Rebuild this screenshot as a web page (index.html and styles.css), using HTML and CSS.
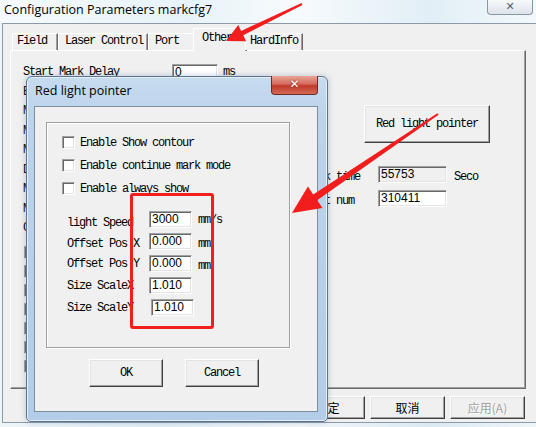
FILE: index.html
```html
<!DOCTYPE html>
<html>
<head>
<meta charset="utf-8">
<link rel="stylesheet" href="styles.css">
</head>
<body>
<div class="screen">
  <div class="window">
    <div class="titlebar">
      <span class="title">Configuration Parameters markcfg7</span>
      <span class="win-close">✕</span>
    </div>
    <div class="client">
      <div class="tabs">
        <div class="tab t-field">Field</div>
        <div class="tab t-laser">Laser Control</div>
        <div class="tab t-port">Port</div>
        <div class="tab t-other active">Other</div>
        <div class="tab t-hard">HardInfo</div>
      </div>
      <div class="panel">
        <div class="col-left">
          <div class="frow first"><span class="flabel">Start Mark Delay</span><span class="field w46">0</span><span class="unit">ms</span></div>
          <div class="frow"><span class="flabel">End Mark Delay</span></div>
          <div class="frow"><span class="flabel">Mark Speed</span></div>
          <div class="frow"><span class="flabel">Move Speed</span></div>
          <div class="frow"><span class="flabel">Mark Count</span></div>
          <div class="frow"><span class="flabel">Delay Time</span></div>
          <div class="frow"><span class="flabel">Mark Mode</span></div>
          <div class="frow"><span class="flabel">Mark Power</span></div>
          <div class="frow"><span class="flabel">Corner Delay</span></div>
          <div class="checklist">
            <span class="cb"></span><span class="cb"></span><span class="cb"></span><span class="cb"></span>
            <span class="cb"></span><span class="cb"></span><span class="cb"></span>
          </div>
        </div>
        <div class="col-right">
          <div class="btn big">Red light pointer</div>
          <div class="rrow first"><span class="rlabel">Mark time</span><span class="field w69 ro">55753</span><span class="unit clip">Seco</span></div>
          <div class="rrow"><span class="rlabel">Part num</span><span class="field w69">310411</span></div>
        </div>
      </div>
      <div class="footer">
        <div class="btn cjk">确定</div>
        <div class="btn cjk">取消</div>
        <div class="btn cjk disabled">应用(A)</div>
      </div>
    </div>
  </div>

  <div class="dialog">
    <div class="dlg-head">
      <span class="dlg-title">Red light pointer</span>
      <span class="dlg-close">✕</span>
    </div>
    <div class="dlg-client">
      <div class="group">
        <div class="checks">
          <div class="crow"><span class="cb"></span><span class="clabel">Enable Show contour</span></div>
          <div class="crow"><span class="cb"></span><span class="clabel">Enable continue mark mode</span></div>
          <div class="crow"><span class="cb"></span><span class="clabel">Enable always show</span></div>
        </div>
        <div class="fields">
          <div class="drow"><span class="dlabel low3">light Speed</span><span class="field w43">3000</span><span class="unit">mm/s</span></div>
          <div class="drow"><span class="dlabel low2">Offset Pos X</span><span class="field w43">0.000</span><span class="unit low2">mm</span></div>
          <div class="drow"><span class="dlabel">Offset Pos Y</span><span class="field w43">0.000</span><span class="unit low2">mm</span></div>
          <div class="drow"><span class="dlabel">Size ScaleX</span><span class="field w43">1.010</span></div>
          <div class="drow"><span class="dlabel">Size ScaleY</span><span class="field w43 shift">1.010</span></div>
        </div>
      </div>
      <div class="dlg-buttons">
        <div class="btn dbtn">OK</div>
        <div class="btn dbtn">Cancel</div>
      </div>
    </div>
  </div>

  <div class="highlight"></div>

  <svg class="arrows" width="536" height="427" viewBox="0 0 536 427">
    <polygon fill="#f21d1d" points="301.6,3.1 241.1,30.9 238.3,25.0 226,41 246.1,41.2 243.3,35.3 302.4,4.9"/>
    <polygon fill="#f21d1d" points="437.4,113.2 313.2,194.4 307.9,186.5 292,213 322.5,208.1 317.2,200.2 438.6,114.8"/>
  </svg>
</div>
</body>
</html>
```
FILE: styles.css
```css
* { box-sizing: border-box; }
html, body { margin: 0; padding: 0; }
body {
  width: 536px;
  height: 427px;
  overflow: hidden;
  background: linear-gradient(90deg, #eef5f9 0%, #e3eff6 30%, #f3f8fb 55%, #dbe9f2 80%, #eef5f9 100%);
  font-family: "Liberation Mono", monospace;
  font-size: 12px;
  color: #000;
}
.screen { position: relative; width: 536px; height: 427px; }

/* main window */
.titlebar {
  height: 23px;
  display: flex;
  justify-content: space-between;
  align-items: flex-start;
  padding-left: 4px;
  background: linear-gradient(90deg, #f6fafc 0%, #e7f2f8 35%, #f7fbfd 55%, #e2eef6 80%, #f2f8fb 100%);
}
.title {
  font-family: "Open Sans", "Noto Sans", sans-serif;
  font-size: 12.5px;
  line-height: 20px;
  color: #000;
}
.win-close {
  width: 46px;
  height: 15px;
  margin-right: 3px;
  border: 1px solid #8896a6;
  border-top: none;
  border-radius: 0 0 4px 4px;
  background: linear-gradient(180deg, #f7f9fb, #dde3ea);
  font-family: "DejaVu Sans", sans-serif;
  font-size: 11px;
  font-weight: bold;
  line-height: 13px;
  text-align: center;
  color: #56606c;
}
.client {
  margin-left: 2px;
  height: 400px;
  border-top: 1px solid #8c99a6;
  border-left: 1px solid #8c99a6;
  border-bottom: 1px solid #8c99a6;
  background: #f0f0f0;
}
.tabs {
  height: 26px;
  display: flex;
  align-items: flex-end;
  padding-left: 9px;
  position: relative;
  z-index: 2;
}
.tab {
  height: 17px;
  border: 1px solid;
  border-bottom: none;
  border-color: #fff #696969 transparent #fff;
  box-shadow: inset -1px 0 #a0a0a0;
  padding-left: 4px;
  line-height: 15px;
  letter-spacing: -1.2px;
  background: #f0f0f0;
}
.t-field { width: 46px; }
.t-laser { width: 90px; padding-left: 6px; }
.t-port { width: 47px; padding-left: 6px; }
.t-other { width: 52px; }
.t-hard { width: 58px; }
.tab.active {
  height: 23px;
  margin: 0 -2px -1px -2px;
  width: 54px;
  padding-left: 8px;
  line-height: 18px;
}
.panel {
  margin-left: 7px;
  width: 516px;
  height: 339px;
  border: 1px solid;
  border-color: #fff #696969 #696969 #fff;
  box-shadow: inset -1px -1px #a0a0a0;
  display: flex;
  position: relative;
  z-index: 1;
}
.col-left {
  width: 295px;
  padding-left: 12px;
  padding-top: 11px;
  letter-spacing: -1.2px;
}
.frow {
  height: 19.5px;
  display: flex;
  align-items: center;
}
.frow.first { height: 20px; }
.flabel { width: 149px; white-space: nowrap; }
.unit { margin-left: 5px; white-space: nowrap; letter-spacing: -1.2px; }
.field {
  display: inline-block;
  height: 17px;
  border: 1px solid;
  border-color: #a0a0a0 #fff #fff #a0a0a0;
  box-shadow: inset 1px 1px #696969, inset -1px -1px #e3e3e3;
  background: #fff;
  font-family: "Liberation Sans", sans-serif;
  font-size: 12px;
  letter-spacing: 0;
  line-height: 15px;
  padding-left: 2px;
}
.w46 { width: 46px; }
.w43 { width: 43px; }
.w69 { width: 69px; }
.field.ro { background: #f0f0f0; }
.checklist {
  display: flex;
  flex-direction: column;
  gap: 6px;
  margin-top: 8px;
  margin-left: 1px;
}
.cb {
  display: inline-block;
  width: 13px;
  height: 13px;
  border: 1px solid;
  border-color: #a0a0a0 #fff #fff #a0a0a0;
  box-shadow: inset 1px 1px #696969, inset -1px -1px #e3e3e3;
  background: #fff;
  flex: none;
}
.col-right {
  width: 219px;
  padding-top: 54px;
  letter-spacing: -1.2px;
}
.btn {
  display: flex;
  align-items: center;
  justify-content: center;
  background: #f0f0f0;
  border: 1px solid;
  border-color: #fff #404040 #404040 #fff;
  box-shadow: inset -1px -1px #a0a0a0, inset 1px 1px #e3e3e3;
  white-space: nowrap;
}
.btn.big {
  margin-left: 58px;
  width: 126px;
  height: 38px;
}
.rrow {
  display: flex;
  align-items: center;
  height: 17px;
  margin-top: 7px;
}
.rrow.first { margin-top: 23px; }
.rlabel { width: 72px; white-space: nowrap; padding-top: 4px; }
.unit.clip { margin-left: 7px; padding-top: 4px; }
.footer {
  display: flex;
  gap: 5px;
  padding-left: 287px;
  padding-top: 7px;
}
.btn.cjk {
  width: 75px;
  height: 23px;
  font-family: "Noto Sans CJK SC", sans-serif;
  font-size: 12px;
}
.btn.disabled {
  color: #a0a0a0;
  text-shadow: 1px 1px #fff;
}

/* modal dialog */
.dialog {
  position: absolute;
  left: 26px;
  top: 76px;
  width: 302px;
  height: 346px;
  border: 1px solid #5a7591;
  border-radius: 6px 6px 5px 5px;
  background: linear-gradient(180deg, #c7dbef 0%, #bcd3ea 12%, #b3cde8 100%);
  box-shadow: inset 0 0 0 1px #e6f0fa, 0 0 6px rgba(80, 110, 140, 0.35);
  padding: 0 9px 9px 7px;
  display: flex;
  flex-direction: column;
  z-index: 5;
}
.dlg-head {
  height: 29px;
  display: flex;
  justify-content: space-between;
  align-items: flex-start;
}
.dlg-title {
  font-family: "Open Sans", "Noto Sans", sans-serif;
  font-size: 12.5px;
  margin-left: 1px;
  margin-top: 5px;
  line-height: 18px;
}
.dlg-close {
  width: 47px;
  height: 19px;
  margin-top: -1px;
  border: 1px solid #6b2c2c;
  border-top: none;
  border-radius: 0 0 4px 4px;
  background: linear-gradient(180deg, #e8a598 0%, #d7685a 45%, #c0392b 55%, #d56a55 100%);
  color: #fff;
  font-family: "DejaVu Sans", sans-serif;
  font-weight: bold;
  font-size: 12px;
  line-height: 17px;
  text-align: center;
  text-shadow: 0 0 2px #6a1a1a;
}
.dlg-client {
  flex: 1;
  background: #f0f0f0;
  border: 1px solid #7c8fa3;
  padding: 15px 0 0 11px;
  letter-spacing: -1.2px;
}
.group {
  width: 244px;
  height: 226px;
  border: 1px solid #a0a0a0;
  box-shadow: inset 1px 1px #fff, 1px 1px #fff;
  padding: 13px 0 0 15px;
}
.checks { display: flex; flex-direction: column; gap: 10px; }
.crow { display: flex; align-items: center; height: 13px; }
.clabel { margin-left: 5px; white-space: nowrap; }
.fields {
  margin-top: 16px;
  margin-left: 5px;
  display: flex;
  flex-direction: column;
  gap: 5px;
}
.drow { display: flex; align-items: center; height: 17px; }
.dlabel { width: 82px; white-space: nowrap; }
.low3 { padding-top: 6px; }
.low2 { padding-top: 4px; }
.drow .unit { margin-left: 6px; }
.field.shift { margin-left: 2px; }
.dlg-buttons {
  display: flex;
  gap: 22px;
  margin-top: 11px;
  margin-left: 43px;
}
.dbtn { width: 74px; height: 28px; }

/* annotations */
.highlight {
  position: absolute;
  left: 130px;
  top: 193px;
  width: 84px;
  height: 136px;
  border: 3px solid #f21d1d;
  border-radius: 3px;
  z-index: 6;
}
.arrows {
  position: absolute;
  left: 0;
  top: 0;
  z-index: 7;
}
```
